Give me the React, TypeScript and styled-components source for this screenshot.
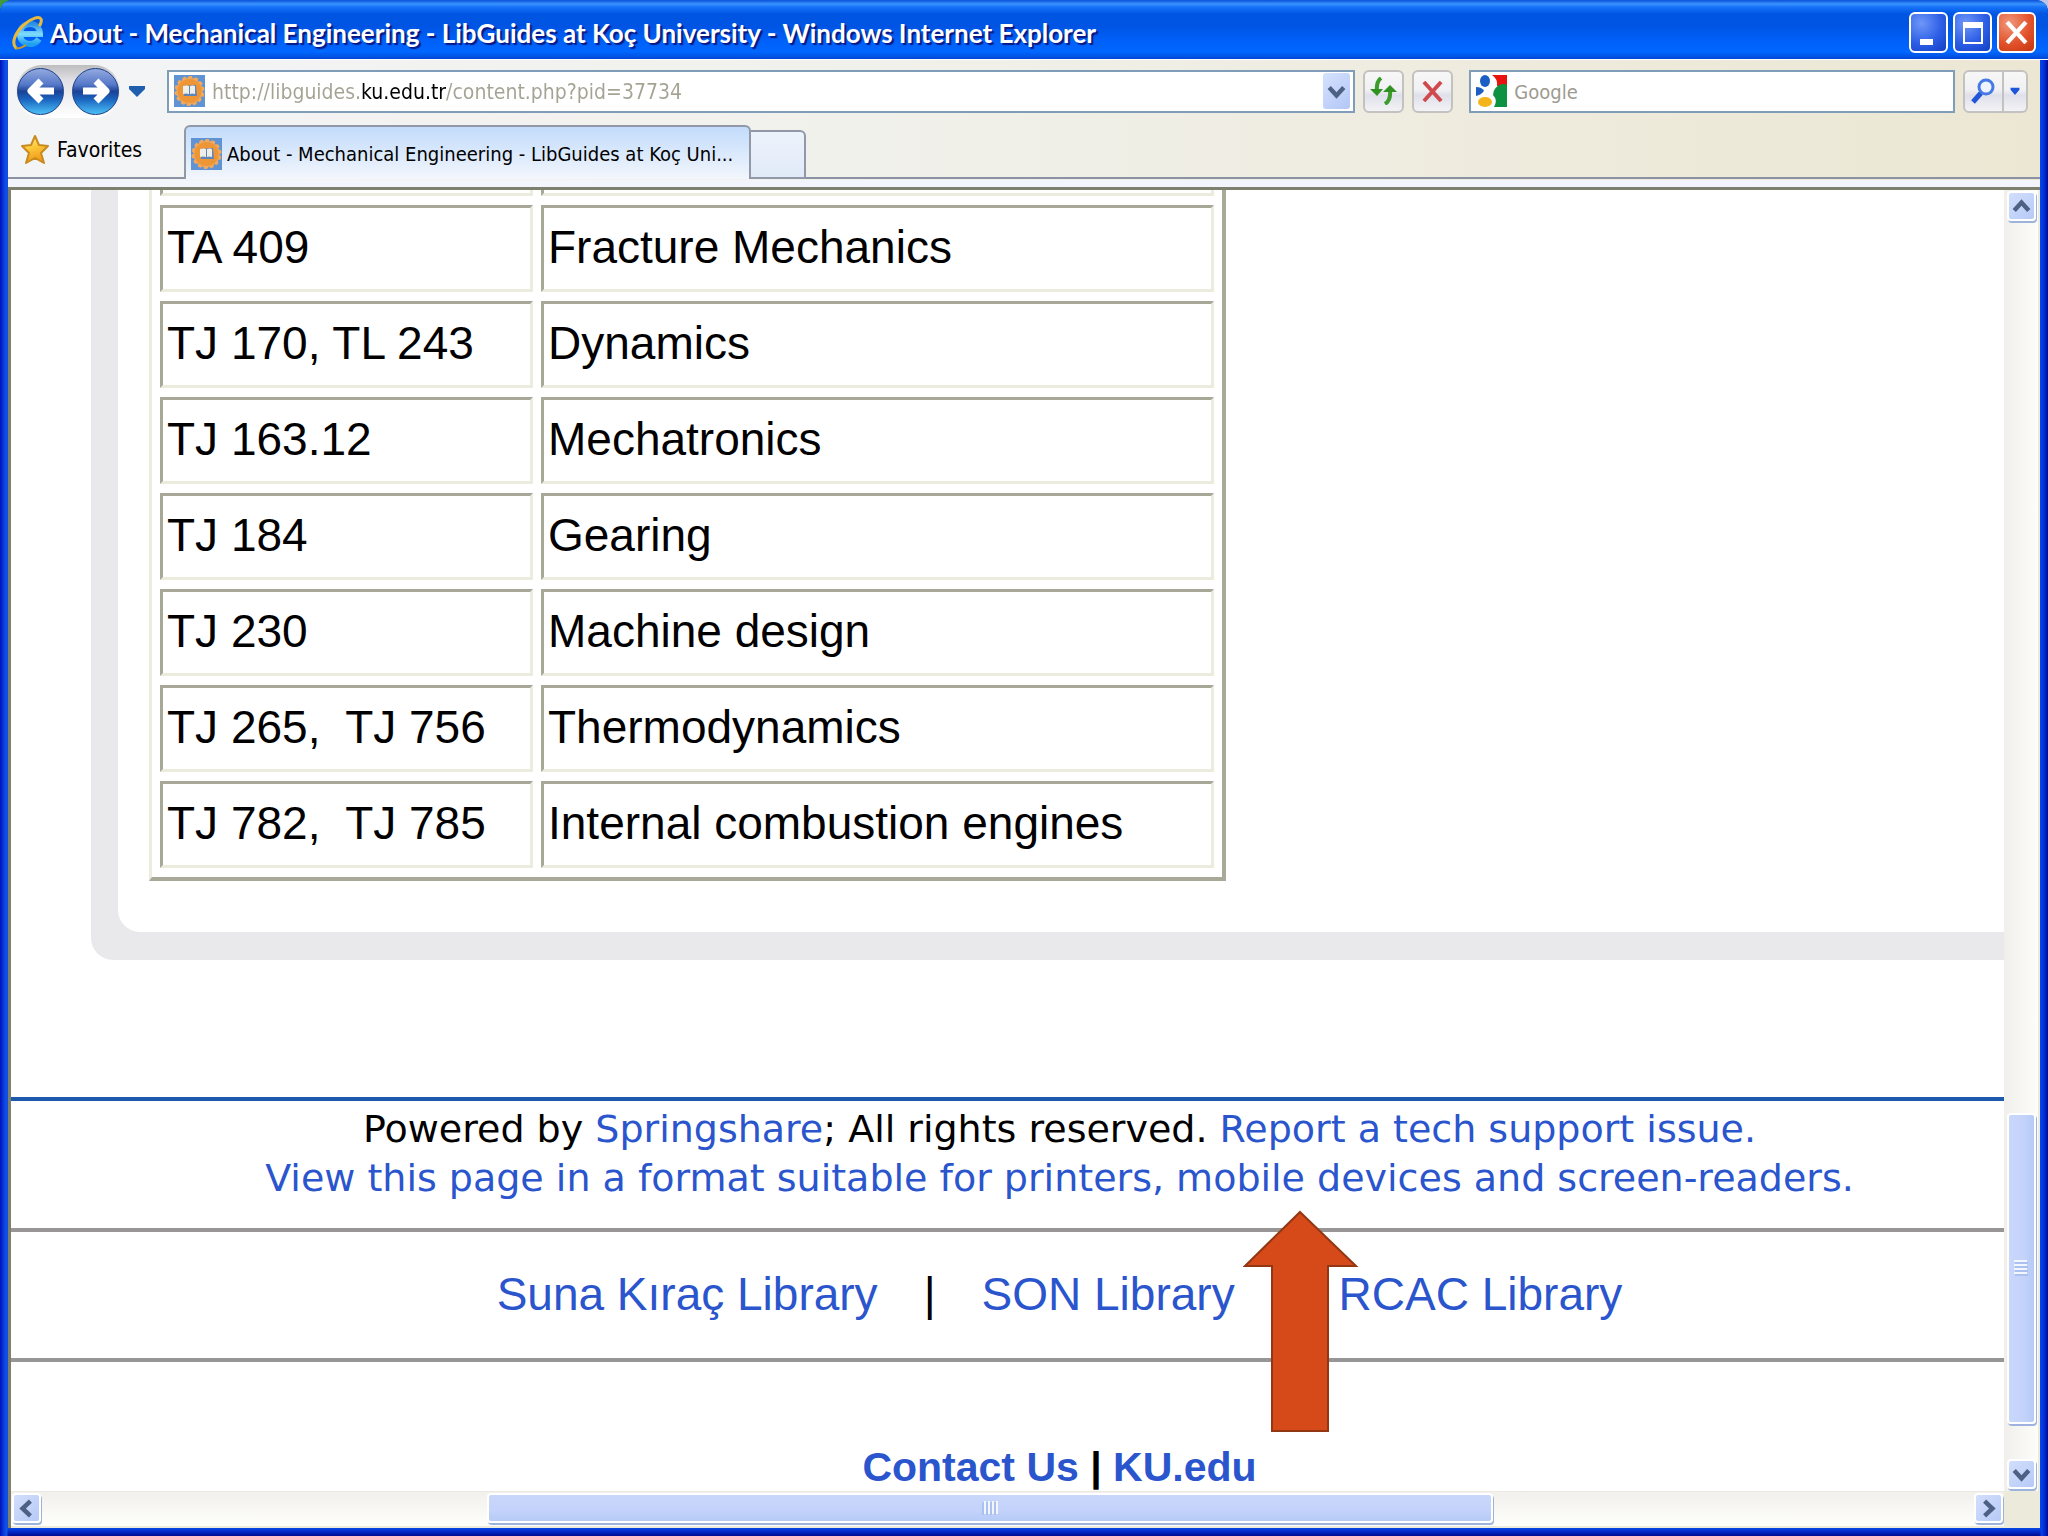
import React from "react";
import styled, { createGlobalStyle, css } from "styled-components";

const UI_FONT = `Tahoma, "DejaVu Sans Condensed", "DejaVu Sans", sans-serif`;
const PAGE_FONT = `Arial, "Liberation Sans", sans-serif`;
const LINK = "#2a55cd";

const GlobalStyle = createGlobalStyle`
  *, *::before, *::after { box-sizing: border-box; }
  body { margin: 0; background: linear-gradient(to right, #3f9a3c 50%, #b9c4e6 50%); font-family: ${PAGE_FONT}; color: #000; }
  button, input { font: inherit; color: inherit; margin: 0; padding: 0; }
  button { cursor: pointer; }
  a { color: ${LINK}; text-decoration: none; }
  svg { display: block; flex: none; }
`;

/* ---------- window frame ---------- */

const Window = styled.div`
  display: flex;
  flex-direction: column;
  min-height: 100vh;
  padding: 0 8px 8px;
  overflow: hidden;
  border-radius: 12px 12px 0 0;
  background:
    linear-gradient(to right, #0010b8 0, #0a3fe0 4px, #1157e6 7px, transparent 8px) left / 8px 100% no-repeat,
    linear-gradient(to left, #000a9c 0, #0030d8 4px, #0842e4 7px, transparent 8px) right / 8px 100% no-repeat,
    linear-gradient(to top, #00098f 0, #0127c4 4px, #0a49e6 8px) bottom / 100% 8px no-repeat,
    #0842e4;
`;

const TitleBar = styled.header`
  display: flex;
  align-items: center;
  gap: 6px;
  height: 60px;
  margin: 0 -8px;
  padding: 7px 12px 1px;
  border-bottom: 1px solid #fff;
  background: linear-gradient(#0a50d8 0, #3a93ff 4px, #1673f8 7px, #0055e2 14px, #0054e3 26px, #0061fb 42px, #0067ff 52px, #0047d4 59px);
`;

const Title = styled.h1`
  flex: 1;
  margin: 0;
  color: #fff;
  font: bold 26px/34px "Trebuchet MS", Lato, "Open Sans", sans-serif;
  text-shadow: 2px 2px 1px #0a1883;
  white-space: nowrap;
`;

const WindowButtons = styled.div`
  display: flex;
  gap: 5px;
`;

const WindowButton = styled.button<{ $close?: boolean }>`
  display: grid;
  place-items: center;
  width: 39px;
  height: 41px;
  border: 2px solid #fff;
  border-radius: 6px;
  background: ${(p) =>
    p.$close
      ? "radial-gradient(circle at 30% 25%, #f0987c, #e2532c 55%, #c4330c)"
      : "radial-gradient(circle at 30% 25%, #6f97f8, #2c5ee6 55%, #1240c4)"};
`;

/* ---------- toolbars ---------- */

const Chrome = styled.div`
  background: linear-gradient(to right, #f3f4f6 0, #f1f1ec 40%, #eeebdd 75%, #ebe7d3 100%);
`;

const AddressRow = styled.div`
  display: flex;
  align-items: center;
  gap: 8px;
  padding: 3px 12px 3px 8px;
  height: 62px;
`;

const NavGroup = styled.div`
  display: flex;
  align-items: center;
  gap: 5px;
  width: 143px;
`;

const NavPill = styled.div`
  display: flex;
  justify-content: space-between;
  width: 104px;
  height: 53px;
  padding: 3px 1px;
  border-radius: 26px;
  background: linear-gradient(#bdbdc0, #e2e2e6 30%, #fff);
`;

const RoundButton = styled.button`
  display: grid;
  place-items: center;
  width: 47px;
  height: 47px;
  border: 1px solid #1c3f86;
  border-radius: 50%;
  background: linear-gradient(#93a9e0 0, #5578c8 35%, #1a4296 50%, #1b66c0 68%, #4cc0f6 100%);
`;

const PlainButton = styled.button`
  display: grid;
  place-items: center;
  width: 24px;
  height: 40px;
  border: 0;
  background: none;
`;

const Field = styled.label<{ $grow: number }>`
  display: flex;
  align-items: center;
  flex: ${(p) => p.$grow} 1 0;
  min-width: 0;
  height: 43px;
  padding: 2px 3px 2px 5px;
  gap: 7px;
  border: 2px solid #7f9db9;
  background: #fff;
`;

const fieldText = css`
  flex: 1;
  min-width: 0;
  height: 34px;
  padding-top: 2px;
  border: 0;
  outline: 0;
  background: none;
  font: 20px/32px ${UI_FONT};
`;

/* The registered domain is black, the rest of the address grey. */
const AddressInput = styled.input`
  ${fieldText}
  font-size: 21px;
  background: linear-gradient(to right, #a3a293 148px, #000 148px, #000 234px, #a3a293 234px);
  -webkit-background-clip: text;
  background-clip: text;
  -webkit-text-fill-color: transparent;
`;

const SearchInput = styled.input`
  ${fieldText}
  &::placeholder { color: #9d9b90; opacity: 1; }
`;

const DropButton = styled.button`
  display: grid;
  place-items: center;
  width: 27px;
  height: 36px;
  border: 0;
  border-radius: 3px;
  background: linear-gradient(135deg, #d5e1fd, #b3c7f7);
`;

const ToolButton = styled.button<{ $w: number; $side?: "left" | "right" }>`
  display: grid;
  place-items: center;
  width: ${(p) => p.$w}px;
  height: 43px;
  border: 2px solid #c3c2c0;
  border-radius: ${(p) => (p.$side === "left" ? "6px 0 0 6px" : p.$side === "right" ? "0 6px 6px 0" : "6px")};
  border-left-width: ${(p) => (p.$side === "right" ? 0 : 2)}px;
  background: linear-gradient(#f7f7f7 0, #f1f1f4 45%, #dfe0ea 60%, #f3f3f6 100%);
`;

const SearchActions = styled.div`
  display: flex;
`;

const SearchGroup = styled.div`
  display: flex;
  flex: 558 1 0;
  gap: 8px;
  margin-left: 8px;
`;

const TabRow = styled.div`
  display: flex;
  align-items: flex-end;
  height: 58px;
  padding-bottom: 1px;
`;

const FavoritesBar = styled.div`
  display: flex;
  align-items: center;
  align-self: stretch;
  width: 176px;
  padding: 0 12px;
  border-bottom: 2px solid #8b92a4;
`;

const FavoritesButton = styled.button`
  display: flex;
  align-items: center;
  gap: 7px;
  border: 0;
  background: none;
  font: 21px/28px ${UI_FONT};
`;

const Tab = styled.button`
  display: flex;
  align-items: center;
  gap: 5px;
  width: 567px;
  height: 54px;
  padding: 2px 5px 0;
  border: 2px solid #9199a8;
  border-bottom: 0;
  border-radius: 6px 6px 0 0;
  background: linear-gradient(#c3dcfb, #dceafc 55%, #f3f6fc);
  font: 20px/28px ${UI_FONT};
  white-space: nowrap;
`;

const NewTab = styled.button`
  width: 55px;
  height: 49px;
  border: 2px solid #9199a8;
  border-left-width: 0;
  border-radius: 0 6px 0 0;
  background: linear-gradient(#edf3fc, #e1eaf8);
`;

const TabRest = styled.div`
  flex: 1;
  align-self: stretch;
  border-bottom: 2px solid #8b92a4;
`;

const TabShelf = styled.div`
  height: 7px;
  background: #f2f5fb;
`;

/* ---------- page area ---------- */

const Frame = styled.main`
  display: grid;
  grid-template-columns: minmax(0, 1fr) 34px;
  grid-template-rows: 1fr 35px;
  flex: 1;
  border: solid #7d7f6f;
  border-width: 3px 0 0 3px;
  padding: 0 2px 2px 0;
  background: #ecebdb;
`;

const Page = styled.div`
  background: #fff;
  overflow: hidden;
`;

const Panel = styled.section`
  margin-left: 80px;
  padding: 0 0 28px 27px;
  border-bottom-left-radius: 22px;
  background: #e9e9eb;
`;

const PanelBody = styled.div`
  overflow: hidden;
  padding: 0 0 51px 31px;
  border-bottom-left-radius: 22px;
  background: #fff;
`;

const CallTable = styled.table`
  width: 1077px;
  margin-top: -9px;
  border: solid #a9a999;
  border-width: 0 4px 4px 3px;
  border-left-color: #ececdf;
  border-collapse: separate;
  border-spacing: 8px 9px;
  table-layout: fixed;
`;

const Cell = styled.td`
  padding: 13px 3px 15px 4px;
  border: 3px solid #ebebde;
  border-top-color: #a8a898;
  border-left-color: #a8a898;
  font-size: 46px;
  line-height: 53px;
  white-space: pre;
`;

const ClippedCell = styled(Cell)`
  height: 6px;
  padding: 0;
  border-top: 0;
`;

const Footer = styled.footer`
  position: relative;
  margin-top: 137px;
  border-top: 4px solid #1c5aab;
`;

const FooterBand = styled.div<{ $h: number; $last?: boolean }>`
  height: ${(p) => p.$h}px;
  padding-left: 104px;
  border-bottom: ${(p) => (p.$last ? "0" : "4px solid #979596")};
  text-align: center;
`;

const Credits = styled(FooterBand)`
  padding-top: 4px;
  font: 38px/49px Verdana, "DejaVu Sans", sans-serif;
  white-space: nowrap;
`;

const Libraries = styled(FooterBand)`
  display: flex;
  justify-content: center;
  gap: 46px;
  padding-top: 36px;
  font-size: 46px;
  line-height: 53px;
  white-space: nowrap;
`;

const Contact = styled(FooterBand)`
  padding-top: 82px;
  font-size: 41px;
  line-height: 47px;
  font-weight: bold;
`;

const ArrowMark = styled.svg`
  position: absolute;
  left: 1232px;
  top: 109px;
`;

/* ---------- scroll bars ---------- */

const scrollFace = css`
  border: 2px solid #fff;
  border-radius: 4px;
  box-shadow: 1px 2px 0 #9db3dd;
`;

const VBar = styled.div`
  display: flex;
  flex-direction: column;
  align-items: center;
  padding: 1px 3px 2px;
  background: linear-gradient(to right, #f0efeb, #fdfdfa);
`;

const HBar = styled.div`
  display: flex;
  align-items: center;
  padding: 1px 1px 3px;
  border-top: 1px solid #ece9e2;
  background: linear-gradient(#f1f0ec, #fefefb);
`;

const ScrollButton = styled.button`
  display: grid;
  place-items: center;
  width: 29px;
  height: 30px;
  background: linear-gradient(135deg, #d3defc, #b6caf7);
  ${scrollFace}
`;

const Thumb = styled.div<{ $grow: number; $vertical?: boolean }>`
  display: grid;
  place-items: center;
  flex: ${(p) => p.$grow} 1 0;
  ${(p) => (p.$vertical ? "width: 29px;" : "height: 30px;")}
  background: linear-gradient(${(p) => (p.$vertical ? "to right" : "to bottom")}, #c9d7fb, #c5d3fb 55%, #b5cbf6);
  ${scrollFace}
`;

const Gap = styled.div<{ $grow: number }>`
  flex: ${(p) => p.$grow} 1 0;
`;

/* ---------- drawings ---------- */

const ExplorerLogo = () => (
  <svg width="32" height="34" viewBox="0 0 32 34" aria-hidden="true">
    <defs>
      <linearGradient id="ie" x1="0" y1="0" x2="0" y2="1">
        <stop offset="0" stopColor="#2a8fe4" />
        <stop offset="0.5" stopColor="#7fdcff" />
        <stop offset="1" stopColor="#1ea0ee" />
      </linearGradient>
    </defs>
    <path d="M27 23c-2 3-5 5-9 5-6 0-10-4-10-10S12 8 18 8s10 4 10 10H9" fill="none" stroke="url(#ie)" strokeWidth="6" />
    <path d="M4 32C-1 27 3 16 13 8 20 2 27 0 29 3c1 2 0 4-1 6" fill="none" stroke="#e8b93a" strokeWidth="3" strokeLinecap="round" />
    <path d="M4 32c3 1 7-1 10-3" fill="none" stroke="#c9982a" strokeWidth="2" />
  </svg>
);

const SiteIcon = () => (
  <svg width="31" height="32" viewBox="0 0 31 32" aria-hidden="true">
    <rect width="31" height="32" fill="#5f93d3" />
    {Array.from({ length: 14 }, (_, i) => (
      <path key={i} d="M12 5l3-4h3l1 4z" fill="#f0a85c" transform={`rotate(${(i * 360) / 14} 15.5 16)`} />
    ))}
    <circle cx="15.500" cy="16" r="12" fill="#ee9636" />
    <path d="M9 11l13-1 1 11H10z" fill="#5f86b8" />
    <path d="M9 11q4-1 6 0v8q-3-1-6 0zM16 11q3-1 5 0v8q-3-1-5 0z" fill="#efefea" />
  </svg>
);

const NavArrow = ({ back }: { back?: boolean }) => (
  <svg width="32" height="32" viewBox="0 0 32 32" aria-hidden="true">
    <path
      d="M29 16H7M16 6 6 16l10 10"
      fill="none"
      stroke="#fff"
      strokeWidth="7"
      strokeLinejoin="round"
      transform={back ? undefined : "rotate(180 16 16)"}
    />
  </svg>
);

const Chevron = ({ turn = 0 }: { turn?: number }) => (
  <svg width="19" height="19" viewBox="0 0 17 17" aria-hidden="true">
    <path d="M2 5l6.500 7L15 5" fill="none" stroke="#4d6185" strokeWidth="4" transform={`rotate(${turn} 8.5 8.5)`} />
  </svg>
);

const Star = () => (
  <svg width="30" height="31" viewBox="0 0 30 31" aria-hidden="true">
    <defs>
      <linearGradient id="star" x1="0" y1="0" x2="0.3" y2="1">
        <stop offset="0" stopColor="#fff2a0" />
        <stop offset="0.5" stopColor="#fcc83a" />
        <stop offset="1" stopColor="#f09a1a" />
      </linearGradient>
    </defs>
    <path d="M15 2l4 9 9 1-7 7 3 10-9-5-9 5 3-10-7-7 9-1z" fill="url(#star)" stroke="#c98a1e" strokeWidth="2" strokeLinejoin="round" />
  </svg>
);

const GoogleIcon = () => (
  <svg width="31" height="36" viewBox="0 0 31 34" aria-hidden="true">
    <path d="M16 1h15v11H21q1-7-5-11z" fill="#e8130f" />
    <path d="M31 11v22H18q4-7-1-12 0-8 9-11 4 0 5 1z" fill="#0c9240" />
    <ellipse cx="9" cy="7" rx="5" ry="6" fill="#1b5fc4" />
    <path d="M0 13q6 0 8 4-3 4-8 5z" fill="#1b5fc4" />
    <ellipse cx="9" cy="28" rx="7" ry="5" fill="#f3b51b" />
  </svg>
);

const RefreshIcon = () => (
  <svg width="29" height="28" viewBox="0 0 29 28" aria-hidden="true">
    <path d="M12 1Q7 5 8 14" fill="none" stroke="#3c9d2c" strokeWidth="4" />
    <path d="M1 12h13L8 19z" fill="#2f9120" />
    <path d="M16 27q6-4 5-13" fill="none" stroke="#3c9d2c" strokeWidth="4" />
    <path d="M14 15h14l-7-7z" fill="#2f9120" />
  </svg>
);

const CrossIcon = ({ color, size, weight }: { color: string; size: number; weight: number }) => (
  <svg width={size} height={size} viewBox="0 0 22 22" aria-hidden="true">
    <path d="M2 1l18 20M20 1 2 21" fill="none" stroke={color} strokeWidth={weight} />
  </svg>
);

const MagnifierIcon = () => (
  <svg width="25" height="26" viewBox="0 0 25 26" aria-hidden="true">
    <path d="M10 15 2 24" stroke="#2157d6" strokeWidth="5" />
    <circle cx="15" cy="9" r="7" fill="#eef4ff" stroke="#4479e6" strokeWidth="3" />
  </svg>
);

const Triangle = ({ w, h, fill }: { w: number; h: number; fill: string }) => (
  <svg width={w} height={h} viewBox="0 0 18 12" preserveAspectRatio="none" aria-hidden="true">
    <path d="M1 1h16v3l-8 8-8-8z" fill={fill} />
  </svg>
);

const Grip = ({ vertical }: { vertical?: boolean }) => (
  <svg width="16" height="16" viewBox="0 0 16 16" aria-hidden="true">
    <g transform={vertical ? undefined : "rotate(90 8 8)"}>
      {[1, 5, 9, 13].map((y) => (
        <g key={y}>
          <path d={`M1 ${y}h13`} stroke="#f2f6ff" strokeWidth="2" />
          <path d={`M2 ${y + 2}h13`} stroke="#93aee6" strokeWidth="1" />
        </g>
      ))}
    </g>
  </svg>
);

const ROWS: [string, string][] = [
  ["TA 409", "Fracture Mechanics"],
  ["TJ 170, TL 243", "Dynamics"],
  ["TJ 163.12", "Mechatronics"],
  ["TJ 184", "Gearing"],
  ["TJ 230", "Machine design"],
  ["TJ 265,  TJ 756", "Thermodynamics"],
  ["TJ 782,  TJ 785", "Internal combustion engines"],
];

export default function App() {
  return (
    <>
      <GlobalStyle />
      <Window>
        <TitleBar>
          <ExplorerLogo />
          <Title>About - Mechanical Engineering - LibGuides at Koç University - Windows Internet Explorer</Title>
          <WindowButtons>
            <WindowButton aria-label="Minimize">
              <svg width="27" height="27" viewBox="0 0 27 27"><path d="M5 20h13v6H5z" fill="#fff" /></svg>
            </WindowButton>
            <WindowButton aria-label="Maximize">
              <svg width="25" height="25" viewBox="0 0 25 25"><path d="M4 3h18v20H4z" fill="none" stroke="#fff" strokeWidth="2" /><path d="M3 2h20v6H3z" fill="#fff" /></svg>
            </WindowButton>
            <WindowButton $close aria-label="Close">
              <CrossIcon color="#fff" size={23} weight={4} />
            </WindowButton>
          </WindowButtons>
        </TitleBar>

        <Chrome>
          <AddressRow>
            <NavGroup>
              <NavPill>
                <RoundButton aria-label="Back"><NavArrow back /></RoundButton>
                <RoundButton aria-label="Forward"><NavArrow /></RoundButton>
              </NavPill>
              <PlainButton aria-label="Recent pages"><Triangle w={18} h={12} fill="#1d5fae" /></PlainButton>
            </NavGroup>
            <Field $grow={1175}>
              <SiteIcon />
              <AddressInput aria-label="Address" defaultValue="http://libguides.ku.edu.tr/content.php?pid=37734" />
              <DropButton type="button" aria-label="Show address list"><Chevron /></DropButton>
            </Field>
            <ToolButton $w={41} aria-label="Refresh"><RefreshIcon /></ToolButton>
            <ToolButton $w={41} aria-label="Stop"><CrossIcon color="#cf4a4f" size={21} weight={4} /></ToolButton>
            <SearchGroup>
              <Field $grow={1}>
                <GoogleIcon />
                <SearchInput aria-label="Search" placeholder="Google" />
              </Field>
              <SearchActions>
                <ToolButton $w={41} $side="left" aria-label="Search"><MagnifierIcon /></ToolButton>
                <ToolButton $w={24} $side="right" aria-label="Search options"><Triangle w={10} h={8} fill="#1c55d8" /></ToolButton>
              </SearchActions>
            </SearchGroup>
          </AddressRow>
          <TabRow>
            <FavoritesBar>
              <FavoritesButton><Star />Favorites</FavoritesButton>
            </FavoritesBar>
            <Tab><SiteIcon />About - Mechanical Engineering - LibGuides at Koç Uni...</Tab>
            <NewTab aria-label="New tab" />
            <TabRest />
          </TabRow>
          <TabShelf />
        </Chrome>

        <Frame>
          <Page>
            <Panel>
              <PanelBody>
                <CallTable>
                  <colgroup>
                    <col width="373" />
                    <col />
                  </colgroup>
                  <tbody>
                    <tr><ClippedCell /><ClippedCell /></tr>
                    {ROWS.map(([code, subject]) => (
                      <tr key={subject}><Cell>{code}</Cell><Cell>{subject}</Cell></tr>
                    ))}
                  </tbody>
                </CallTable>
              </PanelBody>
            </Panel>
            <Footer>
              <Credits $h={131}>
                Powered by <a href="#springshare">Springshare</a>; All rights reserved. <a href="#report">Report a tech support issue.</a>
                <br />
                <a href="#print">View this page in a format suitable for printers, mobile devices and screen-readers.</a>
              </Credits>
              <Libraries $h={130}>
                <a href="#suna">Suna Kıraç Library</a>
                <span>|</span>
                <a href="#son">SON Library</a>
                <span>|</span>
                <a href="#rcac">RCAC Library</a>
              </Libraries>
              <Contact $h={129} $last>
                <a href="#contact">Contact Us</a> | <a href="#ku">KU.edu</a>
              </Contact>
              <ArrowMark width="116" height="224" viewBox="0 0 116 224" aria-hidden="true">
                <path d="M57 2 113 56H85V221H29V56H2Z" fill="#d64918" stroke="#923613" strokeWidth="2" />
              </ArrowMark>
            </Footer>
          </Page>
          <VBar>
            <ScrollButton aria-label="Scroll up"><Chevron turn={180} /></ScrollButton>
            <Gap $grow={894} />
            <Thumb $grow={308} $vertical><Grip vertical /></Thumb>
            <Gap $grow={35} />
            <ScrollButton aria-label="Scroll down"><Chevron /></ScrollButton>
          </VBar>
          <HBar>
            <ScrollButton aria-label="Scroll left"><Chevron turn={90} /></ScrollButton>
            <Gap $grow={446} />
            <Thumb $grow={1003}><Grip /></Thumb>
            <Gap $grow={482} />
            <ScrollButton aria-label="Scroll right"><Chevron turn={-90} /></ScrollButton>
          </HBar>
        </Frame>
      </Window>
    </>
  );
}
